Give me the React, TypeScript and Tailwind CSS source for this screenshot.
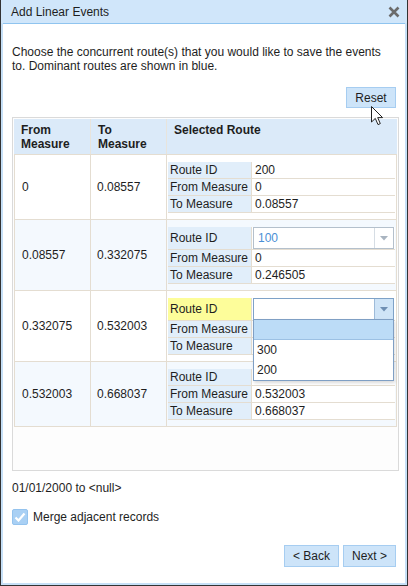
import React from 'react';

type Row = {
  from: string;
  to: string;
  route: string;
  rf: string;
  rt: string;
  kind: 'text' | 'select' | 'open';
  shade: boolean;
};

const rows: Row[] = [
  { from: '0', to: '0.08557', route: '200', rf: '0', rt: '0.08557', kind: 'text', shade: false },
  { from: '0.08557', to: '0.332075', route: '100', rf: '0', rt: '0.246505', kind: 'select', shade: true },
  { from: '0.332075', to: '0.532003', route: '', rf: '', rt: '', kind: 'open', shade: false },
  { from: '0.532003', to: '0.668037', route: '', rf: '0.532003', rt: '0.668037', kind: 'text', shade: true },
];

function Arrow({ color }: { color: string }) {
  return (
    <svg width="8" height="5" viewBox="0 0 8 5">
      <path d="M0 0 L8 0 L4 4.5 Z" fill={color} />
    </svg>
  );
}

function SubRow({ label, children, yellow, tall }: { label: string; children?: React.ReactNode; yellow?: boolean; tall?: boolean }) {
  return (
    <div className={`flex border-b border-[#e4ddd1] ${tall ? 'h-[23px]' : 'h-[17px]'}`}>
      <div className={`w-[84px] shrink-0 flex items-center pl-[2px] border-r border-[#e4ddd1] ${yellow ? 'bg-[#fdfd9a]' : 'bg-[#e1eefa]'}`}>
        {label}
      </div>
      <div className="flex-1 flex items-center bg-white">{children}</div>
    </div>
  );
}

function RouteCell({ row }: { row: Row }) {
  return (
    <div className="pt-[7px] pb-[6px] px-[1px] border-r border-[#e4ddd1]">
      {row.kind === 'text' && (
        <SubRow label="Route ID">
          <span className="pl-[3px]">{row.route}</span>
        </SubRow>
      )}
      {row.kind === 'select' && (
        <SubRow label="Route ID" tall>
          <div className="ml-[1px] mr-[1px] h-[22px] flex-1 flex border border-[#b4c0cc] bg-white">
            <span className="flex-1 pl-[4px] flex items-center text-[#4a8fd6]">{row.route}</span>
            <span className="w-[19px] flex items-center justify-center border-l border-[#d6dde4]">
              <Arrow color="#a9b4c0" />
            </span>
          </div>
        </SubRow>
      )}
      {row.kind === 'open' && (
        <SubRow label="Route ID" yellow tall>
          <div className="relative ml-[1px] mr-[1px] h-[22px] flex-1 flex border border-[#7ea2c8] bg-white">
            <span className="flex-1" />
            <span className="w-[19px] flex items-center justify-center border-l border-[#9ebbd9] bg-[#cfe4f7]">
              <Arrow color="#6f8fb3" />
            </span>
            <div className="absolute left-[-1px] right-[-1px] top-[20px] z-10 bg-white border border-[#7f9fc4] shadow-[1px_2px_3px_rgba(0,0,0,0.15)]">
              <div className="h-[20px] bg-[#bcdcf7] border-b border-[#9cc1e4]" />
              <div className="h-[20px] pl-[3px] flex items-center">300</div>
              <div className="h-[20px] pl-[3px] flex items-center">200</div>
            </div>
          </div>
        </SubRow>
      )}
      <SubRow label="From Measure">
        <span className="pl-[3px]">{row.rf}</span>
      </SubRow>
      <SubRow label="To Measure">
        <span className="pl-[3px]">{row.rt}</span>
      </SubRow>
    </div>
  );
}

export default function App() {
  return (
    <div className="w-[408px] h-[586px] bg-[#c6e0f7] border-x border-b border-[#333] flex flex-col font-['Liberation_Sans',Arial,sans-serif] text-[12px] leading-[14px] text-[#1e1e1e] relative">
      <div className="h-[23px] shrink-0 bg-[#d0e6fa] flex items-center justify-between pl-[10px] pr-[7px]">
        <span className="text-[12px]">Add Linear Events</span>
        <svg width="12" height="12" viewBox="0 0 12 12">
          <path d="M1.5 1.5 L10.5 10.5 M10.5 1.5 L1.5 10.5" stroke="#6b6b6b" strokeWidth="2.6" />
        </svg>
      </div>
      <div className="flex-1 mx-[2px] mb-[2px] bg-white border-t border-[#8fc4ef] pl-[9px] pr-[6px] flex flex-col">
        <p className="mt-[21px]">
          Choose the concurrent route(s) that you would like to save the events
          <br />
          to. Dominant routes are shown in blue.
        </p>
        <div className="mt-[14px] flex justify-end pr-[3px]">
          <button className="w-[50px] h-[21px] bg-[#cde4f9] border border-[#a6cdf1] text-[12px]">Reset</button>
        </div>
        <div className="mt-[9px] h-[354px] w-[387px] border border-[#dadada] p-[1px] bg-[#fdfdfd]">
          <div className="grid grid-cols-[77px_76px_1fr] h-[36px] bg-[#dbeaf9] font-bold border-b border-[#e4ddd1]">
            <div className="pl-[7px] pt-[4px] border-r border-[#e8e4dc]">From<br />Measure</div>
            <div className="pl-[7px] pt-[4px] border-r border-[#e8e4dc]">To<br />Measure</div>
            <div className="pl-[7px] pt-[4px]">Selected Route</div>
          </div>
          {rows.map((row, i) => (
            <div
              key={i}
              className={`grid grid-cols-[77px_76px_1fr] border-b border-[#e4ddd1] ${row.shade ? 'bg-[#f4f9fe]' : 'bg-white'}`}
            >
              <div className="flex items-center pl-[7px] border-l border-r border-[#e4ddd1]">{row.from}</div>
              <div className="flex items-center pl-[6px] border-r border-[#e4ddd1]">{row.to}</div>
              <RouteCell row={row} />
            </div>
          ))}
        </div>
        <div className="mt-[10px]">01/01/2000 to &lt;null&gt;</div>
        <div className="mt-[14px] flex items-center gap-[5px]">
          <span className="w-[16px] h-[16px] rounded-[2px] bg-[#a9d0f4] border border-[#94c3ee] flex items-center justify-center">
            <svg width="12" height="10" viewBox="0 0 12 10">
              <path d="M1.5 5.5 L4.5 8.5 L10.5 1.5" stroke="#fff" strokeWidth="2.2" fill="none" />
            </svg>
          </span>
          <span>Merge adjacent records</span>
        </div>
        <div className="mt-[20px] flex justify-end gap-[4px] pr-[3px]">
          <button className="w-[55px] h-[22px] bg-[#cde4f9] border border-[#a6cdf1] text-[12px]">&lt; Back</button>
          <button className="w-[53px] h-[22px] bg-[#cde4f9] border border-[#a6cdf1] text-[12px]">Next &gt;</button>
        </div>
      </div>
      <svg className="absolute left-[370px] top-[106px] z-20" width="13" height="20" viewBox="0 0 13 20">
        <path d="M0.5 0.5 L0.5 16 L4.3 12.4 L7 18.6 L9.3 17.6 L6.7 11.6 L11.6 11.6 Z" fill="#fff" stroke="#222" strokeWidth="1" strokeLinejoin="round" />
      </svg>
    </div>
  );
}
